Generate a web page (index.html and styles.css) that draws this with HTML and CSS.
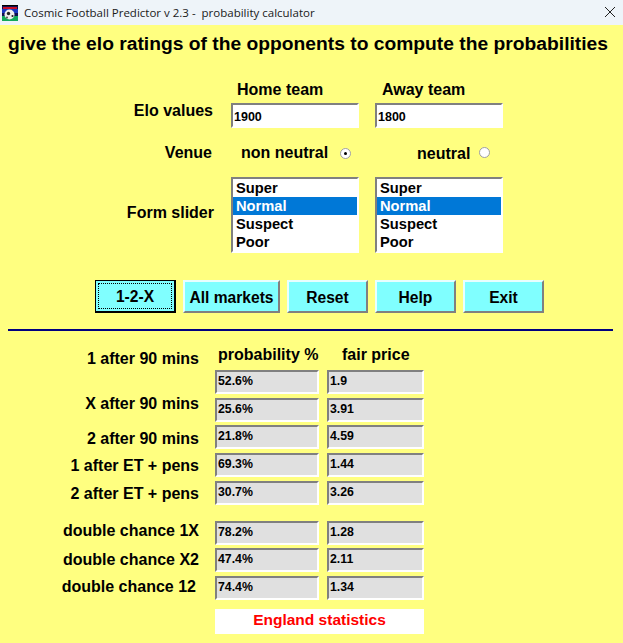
FILE: index.html
```html
<!DOCTYPE html>
<html lang="en">
<head>
<meta charset="utf-8">
<title>Cosmic Football Predictor</title>
<link rel="stylesheet" href="styles.css">
</head>
<body>
<div class="window">
  <header class="titlebar">
    <svg class="app-icon" width="16" height="16" viewBox="0 0 16 16">
      <rect width="16" height="16" fill="#101050"/>
      <rect x="0" y="0" width="16" height="1" fill="#000"/>
      <rect x="1" y="2" width="14" height="2" fill="#c8102a"/>
      <rect x="0" y="4" width="16" height="4" fill="#1838c0"/>
      <rect x="0" y="11" width="16" height="5" fill="#12a85a"/>
      <circle cx="7.5" cy="9.5" r="5" fill="#eeeeee"/>
      <circle cx="6.5" cy="8.5" r="1.7" fill="#222"/>
      <circle cx="10.5" cy="11" r="1.1" fill="#222"/>
      <circle cx="5" cy="12.5" r="0.9" fill="#444"/>
    </svg>
    <span class="title-text">Cosmic Football Predictor v 2.3 -&nbsp; probability calculator</span>
    <svg class="close-icon" width="10" height="10" viewBox="0 0 10 10"><path d="M0 0L10 10M10 0L0 10" stroke="#222" stroke-width="1" fill="none"/></svg>
  </header>
  <main class="form">
    <h1 class="heading">give the elo ratings of the opponents to compute the probabilities</h1>

    <section class="setup">
      <div></div>
      <div class="team-head team-home">Home team</div>
      <div class="team-head team-away">Away team</div>

      <div class="row-label elo-label">Elo values</div>
      <input class="field" type="text" value="1900">
      <input class="field" type="text" value="1800">

      <div class="row-label venue-label">Venue</div>
      <div class="venue venue-home"><span>non neutral</span><span class="radio radio-on"></span></div>
      <div class="venue venue-away"><span>neutral</span><span class="radio"></span></div>

      <div class="row-label form-label">Form slider</div>
      <ul class="listbox">
        <li>Super</li><li class="selected">Normal</li><li>Suspect</li><li>Poor</li>
      </ul>
      <ul class="listbox">
        <li>Super</li><li class="selected">Normal</li><li>Suspect</li><li>Poor</li>
      </ul>
    </section>

    <nav class="buttons">
      <button class="btn btn-focus" type="button"><span>1-2-X</span></button>
      <button class="btn btn-wide" type="button">All markets</button>
      <button class="btn" type="button">Reset</button>
      <button class="btn" type="button">Help</button>
      <button class="btn" type="button">Exit</button>
    </nav>

    <hr class="divider">

    <section class="results">
      <div class="res-labels">
        <div class="res-label l1">1 after 90 mins</div>
        <div class="res-label l2">X after 90 mins</div>
        <div class="res-label l3">2 after 90 mins</div>
        <div class="res-label l4">1 after ET + pens</div>
        <div class="res-label l5">2 after ET + pens</div>
        <div class="res-label l6">double chance 1X</div>
        <div class="res-label l7">double chance X2</div>
        <div class="res-label l8">double chance 12</div>
      </div>
      <div class="res-values">
        <div class="res-head"><span class="head-prob">probability %</span><span class="head-price">fair price</span></div>
        <div class="value-row"><div class="value v-prob">52.6%</div><div class="value v-price">1.9</div></div>
        <div class="value-row"><div class="value v-prob">25.6%</div><div class="value v-price">3.91</div></div>
        <div class="value-row"><div class="value v-prob">21.8%</div><div class="value v-price">4.59</div></div>
        <div class="value-row"><div class="value v-prob">69.3%</div><div class="value v-price">1.44</div></div>
        <div class="value-row"><div class="value v-prob">30.7%</div><div class="value v-price">3.26</div></div>
        <div class="value-row group-start"><div class="value v-prob">78.2%</div><div class="value v-price">1.28</div></div>
        <div class="value-row"><div class="value v-prob">47.4%</div><div class="value v-price">2.11</div></div>
        <div class="value-row"><div class="value v-prob">74.4%</div><div class="value v-price">1.34</div></div>
        <div class="banner">England statistics</div>
      </div>
    </section>
  </main>
</div>
</body>
</html>
```
FILE: styles.css
```css
* { box-sizing: border-box; }
html, body { margin: 0; padding: 0; }
body { width: 623px; height: 643px; overflow: hidden; background: #ffff80; color: #000;
  font-family: "Liberation Sans", Arial, sans-serif; font-weight: 700; }
.window { width: 623px; height: 643px; display: flex; flex-direction: column; }

.titlebar { height: 25px; background: #eef4f9; display: flex; align-items: center; padding-left: 2px;
  font-family: "Open Sans", sans-serif; font-weight: 400; font-size: 11.5px; color: #1a1a1a; }
.app-icon { margin-top: 1px; }
.title-text { margin-left: 6px; white-space: pre; }
.close-icon { margin-left: auto; margin-right: 8px; margin-top: -1px; }

.form { flex: 1; padding: 0 0 0 8px; }
.heading { margin: 8px 0 0; font-size: 19.25px; line-height: 21px; font-weight: 700; white-space: nowrap; }

.setup { display: grid; grid-template-columns: 207px 128px 128px; column-gap: 16px; margin-top: 26px;
  grid-template-rows: 23px 25px 49px 76px; font-size: 16px; }
.team-head { line-height: 19px; }
.team-home { padding-left: 6px; }
.team-away { padding-left: 7px; }
.row-label { text-align: right; padding-right: 0; white-space: nowrap; }
.elo-label { padding-top: 0; padding-right: 2px; line-height: 15px; }
.venue-label { line-height: 18px; padding-top: 16px; padding-right: 3px; }
.form-label { line-height: 18px; padding-top: 27px; padding-right: 1px; }

.field { width: 128px; height: 25px; border-style: solid; border-width: 2px; border-color: #808080 #fff #fff #808080;
  background: #fff; padding: 2px 0 0 1px; font: 700 12.5px "Liberation Sans", Arial, sans-serif; color: #000; outline: none; }

.venue { display: flex; align-items: center; height: 18px; margin-top: 16px; white-space: nowrap; }
.venue-home { padding-left: 10px; }
.venue-away { padding-left: 42px; margin-top: 17px; }
.radio { width: 11px; height: 11px; border-radius: 50%; background: #fff; border: 1px solid #a0a0a0; position: relative; }
.venue-home .radio { margin-left: 12px; }
.venue-away .radio { margin-left: 9px; margin-top: -3px; }
.radio-on::after { content: ""; position: absolute; left: 3px; top: 3px; width: 3px; height: 3px; border-radius: 50%; background: #000; }

.listbox { list-style: none; margin: 0; padding: 0; width: 128px; height: 76px; border-style: solid; border-width: 2px;
  border-color: #808080 #fff #fff #808080; background: #fff; font-size: 14.7px; }
.listbox li { height: 18px; line-height: 18px; padding-left: 3px; }
.listbox .selected { background: #0078d7; color: #fff; }

.buttons { display: flex; gap: 7px; margin: 27px 0 0 87px; }
.btn { width: 81px; height: 33px; padding: 2px 0 0; background: #80ffff; font: 700 15.6px "Liberation Sans", Arial, sans-serif; color: #000;
  border-style: solid; border-width: 2px; border-color: #e8ffff #808080 #808080 #e8ffff; }
.btn-wide { width: 97px; }
.btn-focus { border: 1px solid #000; border-right-width: 2px; border-bottom-width: 2px; padding: 2px; }
.btn-focus span { display: flex; align-items: center; justify-content: center; height: 100%; padding-top: 1px; border: 1px dotted #000; }

.divider { margin: 16px 0 0; width: 605px; height: 2px; border: 0; background: #000080; }

.results { display: flex; margin-top: 16px; }
.res-labels { width: 191px; font-size: 16px; text-align: right; white-space: nowrap; }
.res-label { line-height: 18px; }
.l1 { margin-top: 3px; }
.l2 { margin-top: 27px; }
.l3 { margin-top: 17px; }
.l4 { margin-top: 9px; }
.l5 { margin-top: 10px; }
.l6 { margin-top: 19px; }
.l7 { margin-top: 11px; }
.l8 { margin-top: 9px; padding-right: 3px; }

.res-values { margin-left: 16px; }
.res-head { height: 23px; font-size: 16px; line-height: 15px; display: flex; }
.head-prob { margin-left: 3px; width: 124px; white-space: nowrap; }
.head-price { margin-left: 0; white-space: nowrap; }
.value-row { display: flex; gap: 8px; margin-bottom: 3.7px; }
.group-start { margin-top: 16px; }
.value { height: 24px; width: 104px; border-style: solid; border-width: 2px; border-color: #808080 #fff #fff #808080;
  background: #e0e0e0; font-size: 12.3px; line-height: 18px; padding-left: 1px; }
.v-price { width: 97px; }
.banner { width: 209px; height: 25px; margin-top: 9px; background: #fff; color: #ff0000; font-size: 15.5px; line-height: 22px; text-align: center; }
```
